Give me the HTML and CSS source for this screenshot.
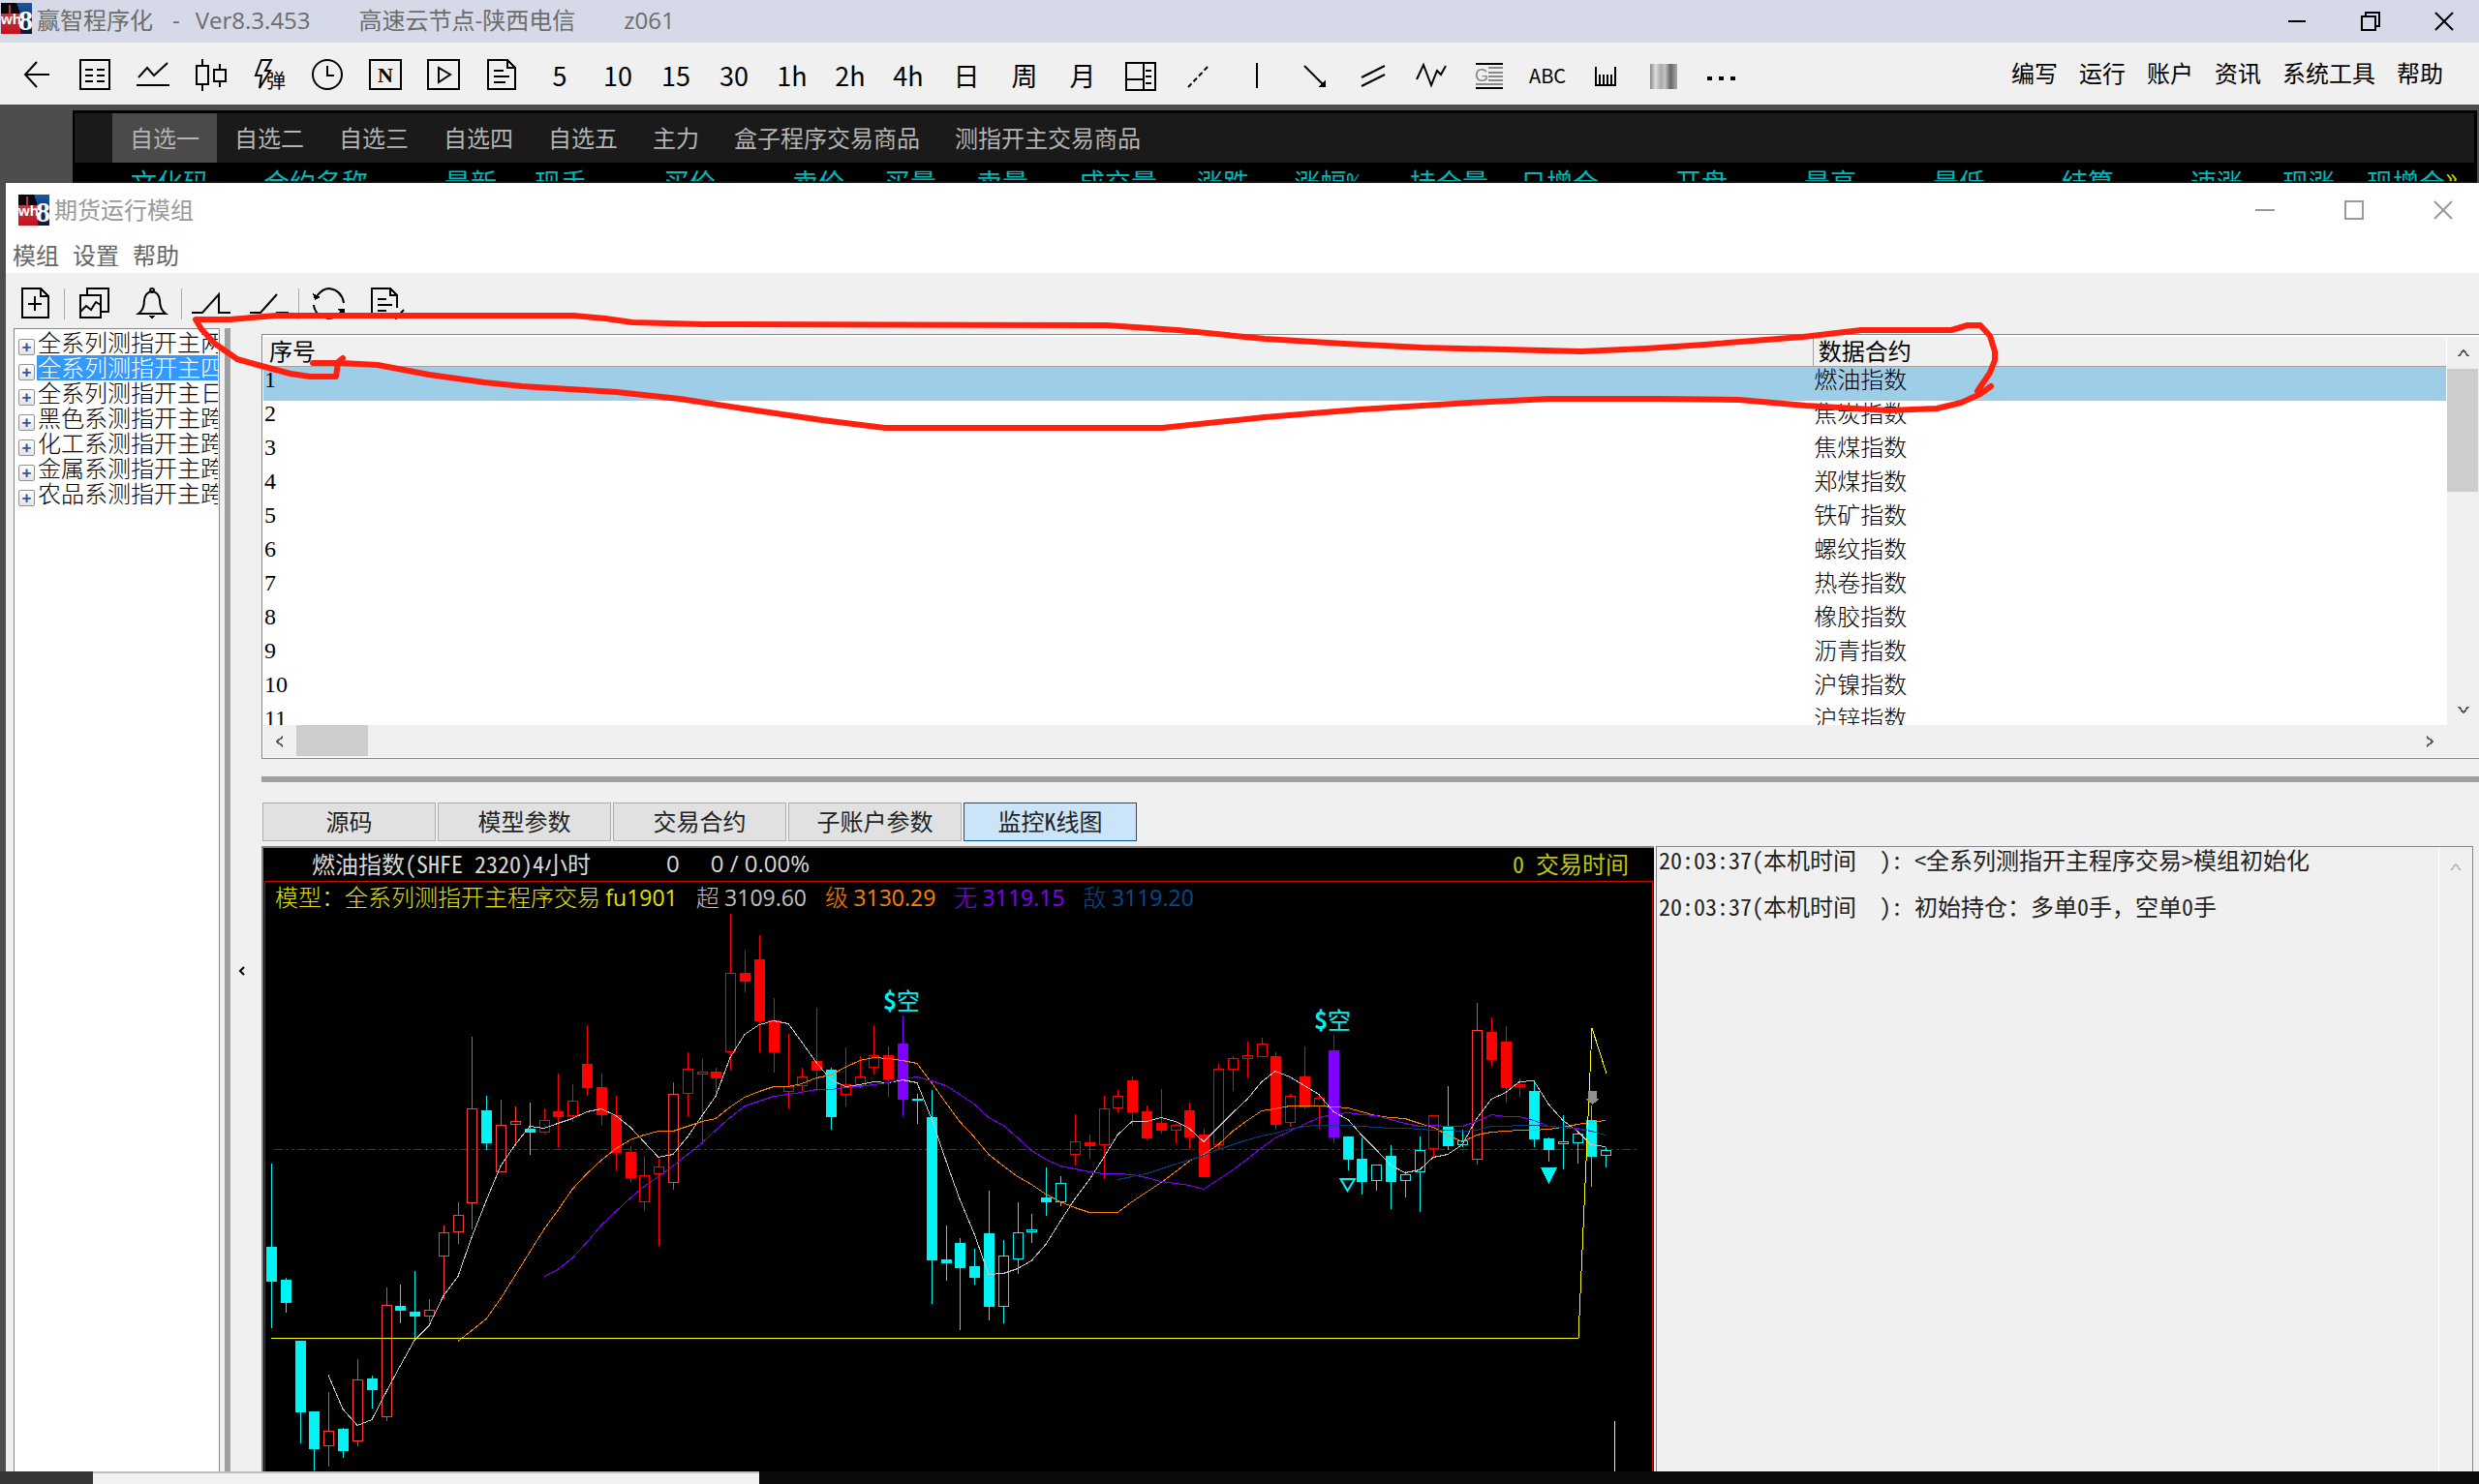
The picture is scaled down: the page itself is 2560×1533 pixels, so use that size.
FILE: index.html
```html
<!DOCTYPE html>
<html lang="zh-CN">
<head>
<meta charset="utf-8">
<title>赢智程序化</title>
<link rel="stylesheet" href="styles.css">
</head>
<body>
<svg class="defs" aria-hidden="true">
  <defs>
    <linearGradient id="lgRed" x1="0" y1="0" x2="0" y2="1"><stop offset="0" stop-color="#b04048"/><stop offset="1" stop-color="#c80f1c"/></linearGradient>
    <linearGradient id="lgBlue" x1="0" y1="0" x2="0" y2="1"><stop offset="0" stop-color="#1d56a8"/><stop offset="1" stop-color="#0a1730"/></linearGradient>
    <linearGradient id="lgBars"><stop offset="0" stop-color="#888"/><stop offset=".2" stop-color="#ddd"/><stop offset=".4" stop-color="#aaa"/><stop offset=".55" stop-color="#c4c4c4"/><stop offset=".75" stop-color="#666"/><stop offset="1" stop-color="#aaa"/></linearGradient>
    <symbol id="logo" viewBox="0 0 32 32">
      <rect width="32" height="32" fill="#08080c"/>
      <rect y="11" width="20" height="21" fill="url(#lgRed)"/>
      <rect x="8" y="2" width="2" height="10" fill="#c0343c"/>
      <path d="M16 0H32V32H20Q24 20 16 0Z" fill="url(#lgBlue)" stroke="none"/>
      <text x="0" y="22" class="logo-wh">wh</text>
      <text x="18" y="28" class="logo-8">8</text>
    </symbol>
  </defs>
</svg>

<header class="titlebar">
  <svg class="logo"><use href="#logo"/></svg>
  <h1 class="app-title"><span>赢智程序化</span><span>-</span><span>Ver8.3.453</span><span class="node">高速云节点-陕西电信</span><span class="node">z061</span></h1>
  <div class="win-controls">
    <button aria-label="最小化"><svg viewBox="0 0 20 20"><path d="M1 10H19"/></svg></button>
    <button aria-label="还原"><svg viewBox="0 0 20 20"><path d="M1 5H15V19H1ZM5 5V1H19V15H15"/></svg></button>
    <button aria-label="关闭"><svg viewBox="0 0 20 20"><path class="soft" d="M1 1L19 19M19 1L1 19"/></svg></button>
  </div>
</header>

<nav class="toolbar">
  <div class="tools">
    <button aria-label="返回"><svg viewBox="0 0 34 34"><path class="soft" d="M17 4L5 17L17 30M5 17H30"/></svg></button>
    <button aria-label="报价"><svg viewBox="0 0 34 34"><path d="M2 2H32V32H2ZM7 12H15M19 12H27M7 18H15M19 18H27M7 24H15M19 24H27"/></svg></button>
    <button aria-label="分时"><svg viewBox="0 0 34 34"><path class="soft" d="M2 20L11 10L18 18L32 5"/><path d="M0 28H34"/></svg></button>
    <button aria-label="K线"><svg viewBox="0 0 34 34"><path d="M2 8H14V27H2ZM8 1V8M8 27V34M20 12H32V24H20ZM26 6V12M26 24V30"/></svg></button>
    <button aria-label="闪电弹窗"><svg viewBox="0 0 34 34"><path class="soft" d="M9 2H19L13 13H18L7 31L9 18H3Z"/><text x="14" y="31" class="ico-cjk">弹</text></svg></button>
    <button aria-label="时间"><svg viewBox="0 0 34 34"><circle class="soft" cx="17" cy="17" r="15"/><path d="M17 8V18H24"/></svg></button>
    <button aria-label="新闻"><svg viewBox="0 0 34 34"><path d="M1 2H33V32H1Z"/><text x="17" y="25" class="ico-n">N</text></svg></button>
    <button aria-label="播放"><svg viewBox="0 0 34 34"><path d="M1 2H33V32H1Z"/><path class="soft" d="M12 10V25L24 17Z"/></svg></button>
    <button aria-label="文档"><svg viewBox="0 0 34 34"><path d="M3 2H23L31 10V32H3ZM23 2V10H31M9 13H19M9 19H25M9 25H21"/></svg></button>
    <button>5</button><button>10</button><button>15</button><button>30</button><button>1h</button><button>2h</button><button>4h</button><button>日</button><button>周</button><button>月</button>
    <button aria-label="布局"><svg viewBox="0 0 34 34"><path d="M2 5H32V33H2ZM20 5V33M2 22H20M22 13H28M22 19H28M22 26H28"/></svg></button>
    <button aria-label="虚线"><svg viewBox="0 0 34 34"><path class="soft" d="M6 30L28 7" stroke-dasharray="5 3"/></svg></button>
    <button aria-label="竖线"><svg viewBox="0 0 34 34"><path d="M17 5V31"/></svg></button>
    <button aria-label="箭头"><svg viewBox="0 0 34 34"><path class="soft" d="M6 8L26 28"/><path class="fill" d="M28 30H20L28 22Z"/></svg></button>
    <button aria-label="平行线"><svg viewBox="0 0 34 34"><path class="soft" d="M5 20L29 8M5 29L29 17"/></svg></button>
    <button aria-label="波浪"><svg viewBox="0 0 34 34"><path class="soft" d="M2 22L9 7L17 28L23 13L27 17L32 8"/></svg></button>
    <button aria-label="黄金分割"><svg viewBox="0 0 34 34"><path d="M3 6H31M3 31H31"/><path class="grey" d="M16 10H31M16 15H31M16 19H31M16 23H31M3 27H31"/><text x="2" y="24" class="ico-g">G</text></svg></button>
    <button class="abc">ABC</button>
    <button aria-label="周期线"><svg viewBox="0 0 34 34"><path d="M7 9V28H27V9M11 17V28M15 17V28M19 17V28M23 17V28"/></svg></button>
    <button aria-label="色带"><svg viewBox="0 0 34 34"><rect x="3" y="6" width="28" height="26" fill="url(#lgBars)" stroke="none"/></svg></button>
    <button aria-label="更多"><svg viewBox="0 0 34 34"><path class="fill" d="M2 19h5v4h-5zM14 19h5v4h-5zM26 19h5v4h-5z"/></svg></button>
  </div>
  <div class="menus"><button>编写</button><button>运行</button><button>账户</button><button>资讯</button><button>系统工具</button><button>帮助</button></div>
</nav>

<section class="quotes">
  <div class="quote-panel">
    <nav class="quote-tabs">
      <button class="on">自选一</button><button>自选二</button><button>自选三</button><button>自选四</button><button>自选五</button><button>主力</button><button>盒子程序交易商品</button><button>测指开主交易商品</button>
    </nav>
    <table class="quote-head">
      <colgroup><col class="w139"><col class="w164"><col class="w133"><col class="w93"><col class="w133"><col class="w133"><col class="w95"><col class="w95"><col class="w133"><col class="w95"><col class="w114"><col class="w133"><col class="w114"><col class="w133"><col class="w133"><col class="w133"><col class="w133"><col class="w133"><col class="w95"><col class="w114"><col></colgroup>
      <thead><tr><th>文化码</th><th>合约名称</th><th>最新</th><th>现手</th><th>买价</th><th>卖价</th><th>买量</th><th>卖量</th><th>成交量</th><th>涨跌</th><th>涨幅%</th><th>持仓量</th><th>日增仓</th><th>开盘</th><th>最高</th><th>最低</th><th>结算</th><th>速涨</th><th>现涨</th><th>现增仓</th><th class="more">»</th></tr></thead>
    </table>
  </div>
</section>

<main class="module">
  <header class="module-title">
    <svg class="logo"><use href="#logo"/></svg>
    <h2>期货运行模组</h2>
    <div class="win-controls wide">
      <button aria-label="最小化"><svg viewBox="0 0 20 20"><path d="M0 10H20"/></svg></button>
      <button aria-label="最大化"><svg viewBox="0 0 20 20"><path d="M1 1H19V19H1Z"/></svg></button>
      <button aria-label="关闭"><svg viewBox="0 0 20 20"><path class="soft" d="M1 1L19 19M19 1L1 19"/></svg></button>
    </div>
  </header>
  <nav class="module-menu"><button>模组</button><button>设置</button><button>帮助</button></nav>

  <div class="module-tools">
    <button aria-label="新建"><svg viewBox="0 0 40 34"><path d="M7 2H26L34 10V32H7ZM26 2V10H34M20 10V25M13 18H27"/></svg></button>
    <button class="sep" aria-label="图表"><svg viewBox="0 0 40 34"><path d="M6 9H27V32H6ZM13 9V2H35V26H28"/><path class="soft" d="M6 26L12 20L17 24L22 16L27 19"/></svg></button>
    <button aria-label="提醒"><svg viewBox="0 0 40 34"><path class="soft" d="M6 28Q12 24 12 14Q13 6 20 5Q27 6 28 14Q28 24 34 28Z"/><circle class="soft" cx="20" cy="4" r="2"/><path class="fill" d="M16 30H24L20 33Z"/></svg></button>
    <button class="sep" aria-label="上升"><svg viewBox="0 0 40 34"><path class="soft" d="M0 27H11L28 8V27H40"/></svg></button>
    <button aria-label="断开"><svg viewBox="0 0 40 34"><path class="soft" d="M0 27H11L28 8M27 27H40"/></svg></button>
    <button class="sep" aria-label="刷新"><svg viewBox="0 0 40 34"><path class="soft" d="M8 10Q14 2 21 2Q34 4 36 17M5 19Q6 30 20 33Q28 33 34 25"/><path class="fill" d="M4 7L6 14L12 11ZM30 23H37V31Z"/></svg></button>
    <button aria-label="校验"><svg viewBox="0 0 40 34"><path d="M5 32V2H24L31 9V22M24 2V9H31M11 13H20M11 19H26M11 25H20M5 32H22"/><path class="soft" d="M26 29L30 33L38 24"/></svg></button>
  </div>

  <div class="workspace">
    <ul class="tree">
      <li><button aria-label="展开">+</button><span>全系列测指开主两</span></li>
      <li class="on"><button aria-label="展开">+</button><span>全系列测指开主四</span></li>
      <li><button aria-label="展开">+</button><span>全系列测指开主日</span></li>
      <li><button aria-label="展开">+</button><span>黑色系测指开主跨</span></li>
      <li><button aria-label="展开">+</button><span>化工系测指开主跨</span></li>
      <li><button aria-label="展开">+</button><span>金属系测指开主跨</span></li>
      <li><button aria-label="展开">+</button><span>农品系测指开主跨</span></li>
    </ul>
    <div class="v-split"></div>
    <div class="gutter"><button aria-label="收起"><svg viewBox="0 0 8 12"><path class="soft" d="M6 2L2 6L6 10"/></svg></button></div>

    <div class="content">
      <section class="list">
        <div class="list-view">
          <table>
            <thead><tr><th class="c-no">序号</th><th class="c-name">数据合约</th></tr></thead>
            <tbody>
              <tr class="on"><td>1</td><td>燃油指数</td></tr>
              <tr><td>2</td><td>焦炭指数</td></tr>
              <tr><td>3</td><td>焦煤指数</td></tr>
              <tr><td>4</td><td>郑煤指数</td></tr>
              <tr><td>5</td><td>铁矿指数</td></tr>
              <tr><td>6</td><td>螺纹指数</td></tr>
              <tr><td>7</td><td>热卷指数</td></tr>
              <tr><td>8</td><td>橡胶指数</td></tr>
              <tr><td>9</td><td>沥青指数</td></tr>
              <tr><td>10</td><td>沪镍指数</td></tr>
              <tr><td>11</td><td>沪锌指数</td></tr>
            </tbody>
          </table>
        </div>
        <div class="v-scroll">
          <button aria-label="向上"><svg viewBox="0 0 12 12"><path d="M1 9L6 3L11 9"/></svg></button>
          <div class="thumb"></div>
          <button class="end" aria-label="向下"><svg viewBox="0 0 12 12"><path d="M1 3L6 9L11 3"/></svg></button>
        </div>
        <div class="h-scroll">
          <button aria-label="向左"><svg viewBox="0 0 12 12"><path d="M9 1L3 6L9 11"/></svg></button>
          <div class="thumb"></div>
          <button class="end" aria-label="向右"><svg viewBox="0 0 12 12"><path d="M3 1L9 6L3 11"/></svg></button>
        </div>
      </section>

      <div class="h-split"></div>

      <nav class="tabs"><button>源码</button><button>模型参数</button><button>交易合约</button><button>子账户参数</button><button class="on">监控K线图</button></nav>

      <div class="panels">
        <section class="chart">
          <div class="chart-head">
            <span>燃油指数(SHFE 2320)4小时</span>
            <span class="last">0</span><span class="change">0 / 0.00%</span>
            <span class="session">0 交易时间</span>
          </div>
          <div class="chart-body">
            <div class="legend">
              <span class="yellow">模型：全系列测指开主程序交易 <b>fu1901</b></span>
              <span class="silver">超 <b>3109.60</b></span>
              <span class="orange">级 <b>3130.29</b></span>
              <span class="violet">无 <b>3119.15</b></span>
              <span class="navy">敌 <b>3119.20</b></span>
            </div>
            <svg id="kline" viewBox="0 0 1432 577" role="img" aria-label="监控K线图"></svg>
          </div>
        </section>
        <section class="log">
          <div class="log-text">
            <p>20:03:37(本机时间  ): &lt;全系列测指开主程序交易&gt;模组初始化</p>
            <p>20:03:37(本机时间  ): 初始持仓：多单0手，空单0手</p>
          </div>
          <div class="log-scroll"><button aria-label="向上"><svg viewBox="0 0 12 12"><path d="M1 9L6 3L11 9"/></svg></button></div>
        </section>
      </div>
    </div>
  </div>
</main>

<footer class="taskbar"><div class="search"></div></footer>

<svg class="pen" viewBox="0 0 2560 1533" aria-hidden="true">
  <path d="M323 375H353L390 377L443 387L500 395L539 399L637 405L702 412L767 422L849 434L914 442H1200L1306 431L1404 423L1518 416L1600 412H1714L1796 413L1865 419L1950 424L2000 422L2025 416L2045 407L2056 399M354 370L349 374L347 389H320L300 386L270 378L245 371L222 355L208 340L202 330H237L285 326H592L625 329L653 333L727 335L1143 336L1216 341L1306 350L1388 355L1469 359L1633 363L1700 360L1760 356L1862 348L1922 341H2015L2032 336H2045L2055 347L2060 363V372L2055 385L2042 404"/>
</svg>
<script src="chart.js"></script>
</body>
</html>
```
FILE: styles.css
```css
* { box-sizing: border-box; }
body {
  margin: 0;
  min-height: 100vh;
  display: flex;
  flex-direction: column;
  position: relative;
  overflow-x: hidden;
  background: #4d4d4d;
  color: #000;
  font: 24px/28px "Open Sans", "Noto Sans CJK SC", sans-serif;
}
h1, h2, p, ul { margin: 0; padding: 0; font: inherit; list-style: none; }
button { border: 0; padding: 0; background: none; color: inherit; font: inherit; white-space: nowrap; }
svg { display: block; }
svg path, svg circle { fill: none; stroke: currentColor; stroke-width: 2; shape-rendering: crispEdges; }
svg .soft { shape-rendering: auto; }
svg .fill { fill: currentColor; stroke: none; }
svg .grey { stroke: #888; }
.defs { position: absolute; width: 0; height: 0; }

.logo { width: 32px; height: 32px; flex: none; }
#logo path { fill: url(#lgBlue); stroke: none; }
.logo-wh { font: bold 15px "Liberation Sans", sans-serif; fill: #fff; }
.logo-8 { font: bold 30px "Liberation Serif", serif; fill: #fff; }

.titlebar {
  flex: none; height: 44px; display: flex; align-items: center;
  padding-left: 1px; padding-bottom: 6px; background: #d6d9e7; color: #6c6c6c;
}
.app-title { display: flex; gap: 16px; padding: 4px 0 0 5px; white-space: pre; }
.app-title span:nth-child(2) { padding-left: 4px; }
.app-title .node { padding-left: 34px; }
.win-controls { margin-left: auto; display: flex; gap: 4px; color: #000; }
.win-controls button { width: 72px; height: 38px; display: grid; place-items: center; padding-top: 6px; }
.win-controls svg { width: 20px; height: 20px; }
.win-controls.wide { gap: 18px; color: #999; }
.win-controls.wide button { width: 74px; padding-top: 0; }

.toolbar {
  flex: none; height: 64px; display: flex; align-items: center; justify-content: space-between;
  padding: 0 37px 0 8px; background: #f0f0f0;
}
.tools { display: flex; }
.tools button { width: 60px; height: 64px; padding-top: 3px; display: grid; place-items: center; font: 27px/60px "Noto Sans CJK SC", sans-serif; }
.tools svg { width: 34px; height: 34px; margin-top: -2px; }
.tools .abc { font-size: 20px; }
.ico-cjk { font: 20px "Noto Sans CJK SC", sans-serif; }
.ico-n { font: bold 22px "Liberation Serif", serif; text-anchor: middle; }
.ico-g { font: 18px "Liberation Sans", sans-serif; fill: #888; }
.menus { display: flex; gap: 22px; }

.quotes { flex: none; padding: 6px 2px 0 75px; height: 81px; overflow: hidden; }
.quote-panel { background: #000; padding: 3px 3px 0 2px; height: 75px; border-bottom: 2px solid #111; overflow: hidden; }
.quote-tabs { display: flex; height: 51px; padding-left: 39px; background: #1a1a1a; color: #b4b4b4; }
.quote-tabs button { padding: 0 18px; height: 51px; }
.quote-tabs .on { background: #4a4a4a; }
.quote-head { width: 100%; table-layout: fixed; border-collapse: collapse; color: #00b8b8; font: 27px/36px "Noto Sans Mono CJK SC", "Noto Sans CJK SC", sans-serif; }
.quote-head th { padding: 2px 0 0; font-weight: inherit; text-align: right; white-space: nowrap; vertical-align: top; }
.quote-head .more { color: #c8d800; text-align: left; line-height: 24px; }
.w93 { width: 93px; } .w95 { width: 95px; } .w114 { width: 114px; } .w133 { width: 133px; } .w139 { width: 139px; } .w164 { width: 164px; }

.module { flex: auto; display: flex; flex-direction: column; margin-left: 6px; background: #f0f0f0; }
.module-title { display: flex; align-items: center; height: 55px; padding-left: 13px; gap: 5px; background: #fff; color: #999; }
.module-menu { display: flex; gap: 14px; height: 38px; padding: 6px 0 0 7px; align-items: flex-start; background: #fff; color: #666; }
.module-tools { display: flex; height: 57px; padding: 16px 0 0; }
.module-tools button { width: 60px; height: 32px; display: grid; place-items: center; }
.module-tools .sep { border-left: 1px solid #a8a8a8; width: 61px; }
.module-tools svg { width: 40px; height: 34px; margin-top: -2px; }

.workspace { flex: auto; display: grid; grid-template-columns: 213px 11px 32px minmax(0, 1fr); padding-left: 8px; }
.tree {
  padding: 1px 1px 0 4px; overflow: hidden; background: #fff;
  border: 1px solid #828790; border-bottom: 0;
  font: 24px/24px "Noto Sans CJK SC", sans-serif; font-weight: 300;
}
.tree li { display: flex; gap: 2px; height: 26px; overflow: hidden; }
.tree span { flex: 1; padding-left: 1px; overflow: hidden; white-space: nowrap; }
.tree .on span { background: #39f; color: #fff; }
.tree button {
  flex: none; width: 17px; height: 17px; margin-top: 9px; border: 1px solid #919191; border-radius: 2px;
  background: linear-gradient(#fff, #e4e4e4); color: #3a4fa0; font: bold 17px/13px "Liberation Sans", sans-serif;
}
.v-split { background: #a0a0a0; border-left: 5px solid #f0f0f0; }
.gutter { display: grid; justify-items: center; align-content: center; padding: 146px 8px 0 0; }
.gutter svg { width: 8px; height: 12px; }

.content { padding-top: 6px; display: flex; flex-direction: column; }
.list {
  flex: none; display: grid; grid-template-columns: minmax(0, 1fr) 34px; grid-template-rows: 401px 33px;
  border: 1px solid #828790; border-right: 0; padding: 2px 0 1px 1px; background: #fff;
}
.list-view { overflow: hidden; }
.list table { width: 100%; table-layout: fixed; border-collapse: collapse; }
.list th { height: 30px; padding: 0 0 0 6px; background: #f0f0f0; border-bottom: 1px solid #a0a0a0; text-align: left; font-weight: normal; }
.list .c-no { width: 71%; }
.list .c-name { border-left: 1px solid #a0a0a0; padding-left: 5px; }
.list td { height: 35px; padding: 0 0 9px 1px; font: 24px/24px "Noto Sans CJK SC", sans-serif; font-weight: 300; vertical-align: top; }
.list td:first-child { font: 24px/26px "Liberation Serif", serif; }
.list .on td { background: #9ecde8; }
.v-scroll, .h-scroll { display: flex; background: #f0f0f0; color: #606060; }
.v-scroll { flex-direction: column; border-left: 1px solid #fff; }
.h-scroll { grid-column: 1 / -1; padding-right: 34px; }
.v-scroll button, .h-scroll button, .log-scroll button { width: 34px; height: 33px; display: grid; place-items: center; }
.v-scroll svg, .h-scroll svg, .log-scroll svg { width: 12px; height: 12px; }
.v-scroll .thumb { height: 127px; background: #cdcdcd; margin-right: 1px; }
.h-scroll .thumb { width: 74px; background: #cdcdcd; margin-bottom: 1px; }
.v-scroll .end { margin-top: auto; }
.h-scroll .end { margin-left: auto; }

.h-split { flex: none; height: 6px; margin: 18px 0 21px; background: #a0a0a0; }
.tabs { display: flex; gap: 2px; padding-left: 1px; height: 45px; }
.tabs button { width: 179px; height: 40px; padding-bottom: 2px; background: #e1e1e1; border: 1px solid #adadad; font: 24px/28px "Noto Sans Mono CJK SC", "Noto Sans CJK SC", sans-serif; color: #222; }
.tabs .on { background: #cce4f7; border-color: #005499; }

.panels { flex: auto; display: grid; grid-template-columns: minmax(0, 1438fr) minmax(0, 844fr); column-gap: 2px; padding-right: 6px; }
.chart { background: #000; border-top: 2px solid #808080; border-left: 2px solid #808080; display: flex; flex-direction: column; }
.chart-head { flex: none; height: 34px; display: flex; align-items: center; padding: 0 26px 2px 50px; color: #d8d8d8; font-family: "Noto Sans Mono CJK SC", "Noto Sans CJK SC", sans-serif; white-space: nowrap; }
.chart-head .last { margin-left: 78px; font: 24px/28px "Open Sans", sans-serif; }
.chart-head .change { margin-left: 32px; font: 24px/28px "Open Sans", sans-serif; }
.session { margin-left: auto; color: #c0c800; }
.chart-body { flex: auto; border: 1px solid #c81000; border-bottom: 0; margin-left: 1px; margin-right: 1px; padding-top: 2px; }
.legend { display: flex; gap: 19px; height: 30px; align-items: center; padding: 0 0 3px 10px; white-space: nowrap; font: 24px/26px "Noto Sans CJK SC", sans-serif; font-weight: 300; }
.legend b { font: 23px/26px "Open Sans", sans-serif; }
.yellow { color: #e4e400; } .silver { color: #c0c0c0; } .orange { color: #ff8000; } .violet { color: #8000ff; } .navy { color: #004c90; }
#kline { width: 100%; height: auto; overflow: visible; }
#kline text { font: 24px "Noto Sans CJK SC", sans-serif; fill: #00f0f0; }
#kline .strong { font-weight: bold; }
#kline .ma { stroke-width: 1; shape-rendering: crispEdges; }

.log { display: flex; border: 1px solid #828790; border-bottom: 0; }
.log-text { flex: 1; padding-left: 2px; font: 24px/26px "Noto Sans Mono CJK SC", "Noto Sans CJK SC", sans-serif; color: #222; overflow: hidden; }
.log-text p { height: 28px; margin-bottom: 20px; white-space: pre; }
.log-scroll { border-left: 1px solid #fff; color: #bfbfbf; padding-top: 4px; }

.taskbar { flex: none; height: 13px; display: flex; background: linear-gradient(90deg, #363636 96px, #0b0b0b 96px); }
.search { width: 688px; margin-left: 96px; background: #f2f2f2; border-top: 2px solid #bdbdbd; }

.pen { position: absolute; left: 0; top: 0; width: 100%; pointer-events: none; }
.pen path { stroke: #ff2010; stroke-width: 6; stroke-linecap: round; stroke-linejoin: round; shape-rendering: auto; }
```
FILE: chart.js
```js
(function () {
  var svg = document.getElementById('kline');
  var NS = 'http://www.w3.org/2000/svg';
  function add(tag, attrs, text) {
    var el = document.createElementNS(NS, tag);
    for (var k in attrs) el.setAttribute(k, attrs[k]);
    if (text) el.textContent = text;
    svg.appendChild(el);
    return el;
  }
  function X(i) { return Math.round(i * 14.82 + 6); }
  function Y(v) { return Math.round(v / 2.6 - 13); }

  // kind, high, body top, body bottom, low
  // c/C: filled/hollow cyan, r/h: filled/hollow red, l: hollow light red, p: violet
  var candles = ('c 707 931 1025 1149|c 1014 1019 1082 1108|c 1183 1183 1376 1459|c 1373 1373 1474 1532|l 1321 1426 1466 1521|' +
    'c 1417 1420 1480 1498|l 1233 1286 1453 1467|c 1277 1285 1316 1365|l 1040 1088 1388 1398|c 1032 1090 1103 1136|' +
    'c 996 1105 1118 1176|l 1071 1101 1117 1131|l 874 893 956 1072|l 811 844 891 923|l 367 560 813 884|' +
    'c 525 564 653 671|l 536 602 730 730|l 554 594 602 660|c 543 614 624 684|h 559 591 623 627|' +
    'r 465 567 582 663|h 493 537 581 595|r 335 439 504 525|r 465 502 577 603|r 525 577 679 725|' +
    'r 660 676 746 757|h 686 739 810 835|h 693 716 735 928|l 489 521 759 777|h 408 453 521 580|' +
    'h 426 461 467 654|r 450 460 478 527|h 36 196 407 455|r 135 195 218 247|r 94 159 325 408|' +
    'r 263 322 408 463|h 358 499 514 559|h 449 472 500 512|r 289 432 458 512|c 449 455 582 616|' +
    'h 395 494 522 554|h 419 472 500 504|h 335 417 449 468|r 393 416 481 528|p 309 385 536 580|' +
    'c 519 533 538 601|c 510 582 967 1084|c 874 965 975 1022|c 907 921 988 1155|c 936 983 1014 1032|' +
    'c 780 895 1092 1129|C 913 953 1091 1136|C 811 893 964 1004|C 843 883 891 921|c 718 798 811 848|' +
    'C 740 758 810 822|h 575 648 685 712|r 629 650 660 694|h 525 560 659 748|h 510 526 560 570|' +
    'r 473 484 570 605|r 551 567 640 642|r 507 598 619 627|h 600 604 618 653|r 543 564 637 668|' +
    'r 613 629 744 744|h 439 453 659 672|h 419 425 454 512|h 380 417 427 476|h 369 386 420 420|' +
    'r 408 419 603 616|h 520 524 599 608|r 393 473 556 562|h 524 531 555 614|p 361 403 637 653|' +
    'c 634 634 697 725|c 637 694 757 791|C 711 711 755 780|c 657 686 757 830|C 728 735 755 798|' +
    'C 634 670 730 837|h 577 578 669 690|c 499 605 660 672|C 616 646 659 662|l 276 349 696 710|' +
    'r 315 353 430 445|r 338 380 504 543|h 478 495 503 528|c 489 512 642 663|c 637 640 670 702|' +
    'C 577 648 654 723|C 619 626 652 707|c 552 590 689 770|C 664 670 687 718').split('|');
  var colors = { c: '#00f4f4', C: '#00f4f4', r: '#ff0000', h: '#ff0000', l: '#ff3c3c', p: '#8000ff' };

  add('path', { d: 'M9 ' + (Y(669) + 0.5) + 'H1417', style: 'stroke:#33337a;stroke-width:1', 'stroke-dasharray': '9 3 3 3 3 3' });

  candles.forEach(function (row, i) {
    var f = row.split(' '), k = f[0], x = X(i), color = colors[k];
    var hi = Y(+f[1]), top = Y(+f[2]), bot = Y(+f[3]), lo = Y(+f[4]);
    add('path', { d: 'M' + (x + 0.5) + ' ' + hi + 'V' + top + 'M' + (x + 0.5) + ' ' + bot + 'V' + lo, style: 'stroke:' + color + ';stroke-width:1' });
    if ('crp'.indexOf(k) >= 0) {
      add('rect', { x: x - 5, y: top, width: 11, height: Math.max(bot - top, 2), fill: color });
    } else {
      add('rect', { x: x - 4.5, y: top + 0.5, width: 10, height: Math.max(bot - top - 1, 2), fill: 'none', stroke: color });
    }
  });

  function average(start, color, values) {
    add('polyline', {
      'class': 'ma', fill: 'none', stroke: color,
      points: values.map(function (v, n) { return X(start + n) + ',' + (Y(v) + 0.5); }).join(' ')
    });
  }
  average(4, '#c8c8c8', [1275,1366,1408,1394,1318,1250,1180,1142,1062,1010,905,805,712,655,607,611,598,586,568,558,576,608,648,690,680,635,577,525,420,360,334,323,329,380,433,480,499,495,485,489,480,488,585,700,800,895,1004,1002,987,966,924,860,800,750,690,630,592,592,583,592,610,648,608,570,533,486,457,472,497,519,567,588,630,668,711,731,723,690,680,656,585,532,516,486,483,545,590,618,654,660]);
  average(13, '#ff8000', [1184,1155,1123,1068,1005,945,882,833,775,733,697,666,641,630,620,618,605,594,585,555,529,512,500,500,492,476,467,448,430,422,425,429,436,490,543,592,635,680,713,742,763,787,808,824,836,838,838,808,783,756,728,700,682,655,620,590,563,559,550,550,550,554,557,567,576,583,584,599,609,628,647,628,622,618,615,615,614,609,601,595,591]);
  average(19, '#8000ff', [1010,990,960,917,871,835,798,768,741,712,680,650,617,582,552,539,526,521,516,508,508,503,500,495,490,479,472,483,497,520,546,582,603,637,670,695,713,721,729,733,732,737,744,755,760,765,776,750,724,695,663,637,618,600,583,574,570,575,578,588,599,605,603,605,605,592,575,579,581,590,605,609,614,620]);
  average(59, '#004080', [750,742,734,720,708,697,683,669,654,643,631,623,613,607,602,604,604,606,609,610,610,613,615,617,620,615,607,605,603,603,606,609,612,620,628]);

  add('polyline', { 'class': 'ma', fill: 'none', stroke: '#ffff00', points: [X(0) + ',' + (Y(1176) + 0.5), (X(91) + 1) + ',' + (Y(1176) + 0.5), (X(92) + 1) + ',' + Y(344), (X(93) + 1) + ',' + Y(465)].join(' ') });
  add('path', { d: 'M1393.5 525V577', style: 'stroke:#e8e8e8;stroke-width:1' });

  [[638, 100], [1083, 120]].forEach(function (p) {
    add('text', { x: p[0], y: p[1], 'class': 'strong' }, '$');
    add('text', { x: p[0] + 14, y: p[1] }, '空');
  });
  add('path', { d: 'M1110.5 275H1125L1117.5 287Z', 'class': 'soft', style: 'stroke:#00f4f4' });
  add('path', { d: 'M1317 263H1334L1325.5 280Z', style: 'fill:#00f4f4;stroke:none' });
  add('path', { d: 'M1366 184H1375V192H1378L1370.5 198L1363 192H1366Z', style: 'fill:#909090;stroke:none' });
})();
```
